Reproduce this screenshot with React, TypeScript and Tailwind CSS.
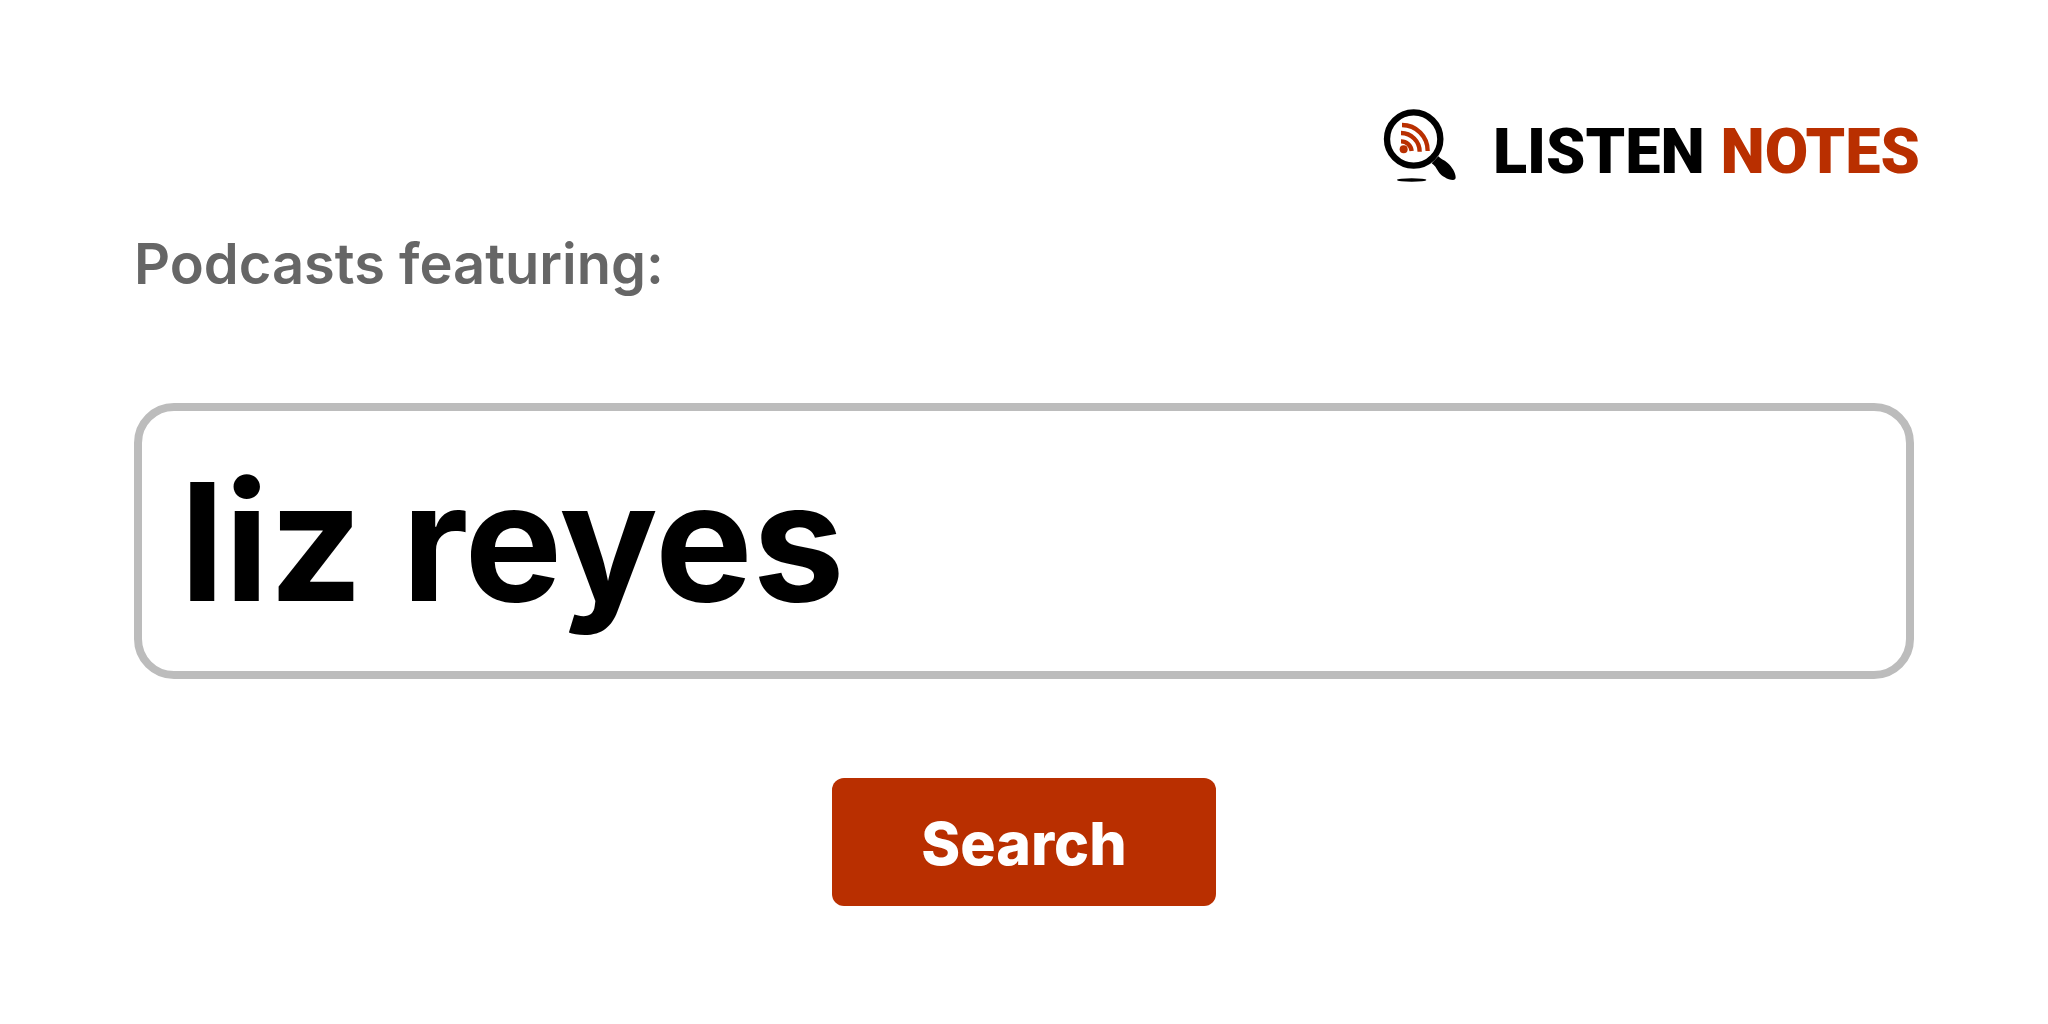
const LogoMark = () => (
  <svg viewBox="39 39 222 225" className="w-[74px] h-[75px]" aria-hidden="true">
    <circle cx="131" cy="132" r="80" fill="#fff" stroke="#000" strokeWidth="19" />
    <path
      d="M185 205 L205 184 C212 192 222 195 232 203 C246 215 257 233 257 247 C257 253 254 255 249 255 C233 254 214 243 206 231 C198 219 195 211 185 205Z"
      fill="#000"
    />
    <ellipse cx="125" cy="255" rx="44" ry="5" fill="#000" />
    <circle cx="101" cy="163" r="12" fill="#b92f00" />
    <g fill="none" stroke="#b92f00" strokeWidth="13">
      <path d="M93 139 A32 32 0 0 1 125 168" />
      <path d="M93 114 A56 56 0 0 1 149 170" />
      <path d="M96 90 A77 77 0 0 1 173 168" />
    </g>
  </svg>
);

const Header = () => (
  <header className="flex justify-end pt-[108px] pr-32">
    <a href="/" className="flex items-center gap-9">
      <LogoMark />
      <span className="pt-3 font-['Roboto',sans-serif] text-[63px] leading-[63px] font-black text-black">
        LISTEN <span className="text-[#b92f00]">NOTES</span>
      </span>
    </a>
  </header>
);

const App = () => {
  return (
    <div className="min-h-screen bg-white font-['Inter',sans-serif]">
      <Header />
      <form className="flex flex-col px-[134px] pt-[45px]" onSubmit={(e) => e.preventDefault()}>
        <label htmlFor="query" className="text-[56px] leading-[72px] font-semibold text-[#666666]">
          Podcasts featuring:
        </label>
        <input
          id="query"
          type="text"
          defaultValue="liz reyes"
          className="mt-[103px] h-[276px] w-full rounded-[40px] border-8 border-[#bcbcbc] bg-white px-[38px] text-[164px] font-bold text-black outline-none"
        />
        <button
          type="submit"
          className="mt-[99px] h-32 w-96 self-center rounded-xl bg-[#b92f00] pt-1 text-[59px] font-extrabold text-white"
        >
          Search
        </button>
      </form>
    </div>
  );
};

export default App;
